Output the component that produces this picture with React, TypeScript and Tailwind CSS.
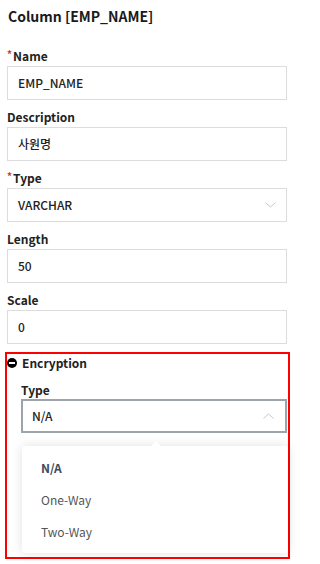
import React from "react";

function Label({ required, children }: { required?: boolean; children: React.ReactNode }) {
  return (
    <div className="h-4 flex items-center text-[12px] font-bold leading-4 text-[#222]">
      {required && <span className="text-[#e0352b] text-[10px] leading-none self-start mt-[1px] mr-[1px]">*</span>}
      {children}
    </div>
  );
}

function ChevronDown() {
  return (
    <svg width="11" height="6" viewBox="0 0 11 6" fill="none">
      <path d="M0.5 0.5 L5.5 5 L10.5 0.5" stroke="#c8c8c8" strokeWidth="1" />
    </svg>
  );
}

function ChevronUp() {
  return (
    <svg width="11" height="6" viewBox="0 0 11 6" fill="none">
      <path d="M0.5 5.5 L5.5 1 L10.5 5.5" stroke="#c8c8c8" strokeWidth="1" />
    </svg>
  );
}

function Field({ label, value, required, select }: { label: string; value: string; required?: boolean; select?: boolean }) {
  return (
    <div className="flex flex-col">
      <Label required={required}>{label}</Label>
      <div className="mt-[2px] h-[34px] border border-[#dcdcdc] pl-[10px] pr-[10px] flex items-center justify-between text-[12px] font-medium text-[#222]">
        <span>{value}</span>
        {select && <ChevronDown />}
      </div>
    </div>
  );
}

export default function App() {
  return (
    <div className="w-[296px] h-[564px] bg-white overflow-hidden pl-[7px] pr-[9px] pt-[7px] font-['Noto_Sans_CJK_KR',sans-serif] text-[#222]">
      <div className="text-[14px] font-bold leading-[18px] pl-px text-[#1a1a1a]">Column [EMP_NAME]</div>
      <div className="mt-[23px] flex flex-col gap-[9px]">
        <Field label="Name" value="EMP_NAME" required />
        <Field label="Description" value="사원명" />
        <Field label="Type" value="VARCHAR" required select />
        <Field label="Length" value="50" />
        <Field label="Scale" value="0" />
      </div>
      <div className="mt-[8px] -ml-[2px] -mr-[3px] border-2 border-[#ff0000] pt-px pb-[4px]">
        <div className="h-4 flex items-center gap-[5px]">
          <span className="w-[10px] h-[10px] rounded-full bg-black flex items-center justify-center">
            <span className="w-[6px] h-[2px] bg-white" />
          </span>
          <span className="text-[12px] font-bold text-[#222]">Encryption</span>
        </div>
        <div className="mt-[11px] pl-[14px] pr-px">
          <Label>Type</Label>
          <div className="mt-px h-[34px] border-2 border-[#9ca5ae] pl-[9px] pr-[11px] flex items-center justify-between text-[12px] font-medium text-[#222]">
            <span>N/A</span>
            <ChevronUp />
          </div>
        </div>
        <div className="relative mt-[13px] ml-[15px] h-[107px] bg-white rounded-[3px] shadow-[0_0_12px_rgba(0,0,0,0.12)] pt-[6px] pl-[19px] text-[12px]">
          <div className="absolute -top-[5px] left-[128px] w-0 h-0 border-l-[6px] border-r-[6px] border-b-[6px] border-l-transparent border-r-transparent border-b-white" />
          <div className="h-[32px] flex items-center font-bold text-[#3d4b5c]">N/A</div>
          <div className="h-[32px] flex items-center text-[#555]">One-Way</div>
          <div className="h-[32px] flex items-center text-[#555]">Two-Way</div>
        </div>
      </div>
    </div>
  );
}
